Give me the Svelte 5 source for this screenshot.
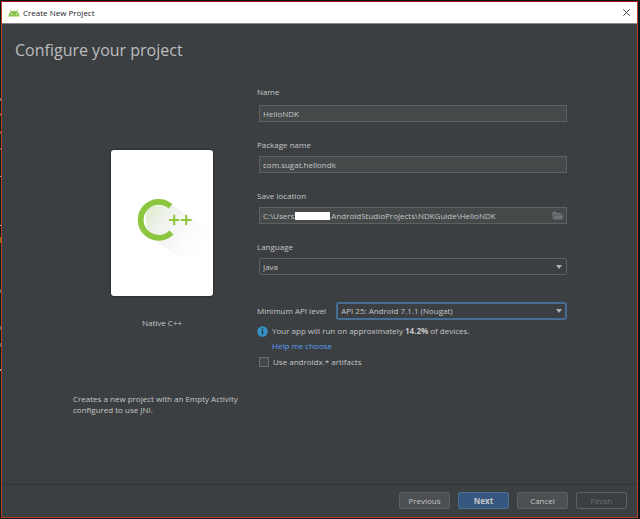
<script>
  let name = $state('HelloNDK');
  let packageName = $state('com.sugat.hellondk');
  let location = $state('C:\\Users\\\u2003\u2003\u2003\u2003.AndroidStudioProjects\\NDKGuide\\HelloNDK');
  let language = $state('Java');
  let api = $state('API 25: Android 7.1.1 (Nougat)');
  let androidx = $state(false);
</script>

<div class="desktop">
  <div class="window">
    <header class="titlebar">
      <svg class="android" width="12" height="8" viewBox="0 0 12 8" aria-hidden="true">
        <path d="M0.5 7.5C0.5 4.2 2.8 2 6 2s5.5 2.2 5.5 5.5z" fill="#8bc34a" />
        <path d="M2 .6 3.6 3M10 .6 8.4 3" stroke="#8bc34a" stroke-width=".9" />
        <circle cx="3.6" cy="5.2" r=".6" fill="#fff" />
        <circle cx="8.4" cy="5.2" r=".6" fill="#fff" />
      </svg>
      <span class="caption">Create New Project</span>
      <button class="close" aria-label="Close">
        <svg width="7" height="7" viewBox="0 0 7 7"><path d="M.3.3 6.7 6.7M6.7.3.3 6.7" stroke="#444" stroke-width="1" /></svg>
      </button>
    </header>

    <h1>Configure your project</h1>

    <main>
      <section class="template">
        <div class="card">
          <svg width="102" height="146" viewBox="0 0 102 146" role="img" aria-label="C++">
            <defs>
              <linearGradient id="shade" x1="30" y1="60" x2="82" y2="94" gradientUnits="userSpaceOnUse">
                <stop offset="0" stop-color="#dcedc8" />
                <stop offset=".4" stop-color="#f0f2ee" />
                <stop offset="1" stop-color="#fefefe" />
              </linearGradient>
            </defs>
            <path d="M34 57 60 54 96 79 90 104 66 106 36 85z" fill="url(#shade)" />
            <path d="M59.5 56.3A18 18 0 1 0 60.5 82.5" fill="none" stroke="#8cc63f" stroke-width="5.8" />
            <path d="M58 70H68.5M63.2 64.7V75.3M70 70H80.5M75.2 64.7V75.3" stroke="#8cc63f" stroke-width="2" />
          </svg>
        </div>
        <p class="kind">Native C++</p>
        <p class="about">Creates a new project with an Empty Activity configured to use JNI.</p>
      </section>

      <form onsubmit={(e) => e.preventDefault()}>
        <div class="field first">
          <label for="name">Name</label>
          <div class="holder"><input id="name" class="box" type="text" bind:value={name} /></div>
        </div>
        <div class="field">
          <label for="package">Package name</label>
          <div class="holder"><input id="package" class="box" type="text" bind:value={packageName} /></div>
        </div>
        <div class="field">
          <label for="location">Save location</label>
          <div class="holder">
            <input id="location" class="box" type="text" bind:value={location} />
            <span class="redacted"></span>
            <button type="button" class="browse" aria-label="Browse">
              <svg width="12" height="9" viewBox="0 0 12 9"><path d="M.5 8V.8H4l1 1.2h4.5v1.4H2.6z" fill="#6e7375" /><path d="M3 4.2h8.8L9.8 8.4H.8z" fill="#6e7375" /></svg>
            </button>
          </div>
        </div>
        <div class="field">
          <label for="language">Language</label>
          <div class="holder">
            <select id="language" class="box" bind:value={language}>
              <option>Java</option>
              <option>Kotlin</option>
            </select>
            <svg class="arrow" width="6" height="4" viewBox="0 0 6 4"><path d="M0 0h6L3 4z" fill="#afb1b3" /></svg>
          </div>
        </div>

        <div class="api">
          <label for="api">Minimum API level</label>
          <div class="holder">
            <select id="api" class="box focused" bind:value={api}>
              <option>API 25: Android 7.1.1 (Nougat)</option>
              <option>API 26: Android 8.0 (Oreo)</option>
            </select>
            <svg class="arrow" width="6" height="4" viewBox="0 0 6 4"><path d="M0 0h6L3 4z" fill="#afb1b3" /></svg>
          </div>
        </div>

        <p class="info">
          <svg width="11" height="11" viewBox="0 0 11 11" aria-hidden="true">
            <circle cx="5.5" cy="5.5" r="5.2" fill="#3592c4" />
            <path d="M5.5 2.2V3.6M5.5 4.6V8.6" stroke="#1e2c34" stroke-width="1.4" />
          </svg>
          <span>Your app will run on approximately <b>14.2%</b> of devices.</span>
        </p>
        <a class="help" href="#help">Help me choose</a>
        <label class="check"><input type="checkbox" bind:checked={androidx} />Use androidx.* artifacts</label>
      </form>
    </main>

    <footer>
      <button>Previous</button>
      <button class="primary">Next</button>
      <button>Cancel</button>
      <button disabled>Finish</button>
    </footer>
  </div>
</div>

<style>
  :global(body) { margin: 0; background: #07191e; }
  * { box-sizing: border-box; }
  .desktop {
    min-height: 100vh;
    display: flex;
    padding: 1px 2px 1px 1px;
    background:
      linear-gradient(#0000 98px, #777 98px 101px, #0000 101px 113px, #85553f 113px 116px, #0000 116px 131px, #85553f 131px 134px, #0000 134px 148px, #85553f 148px 150px, #0000 150px 176px, #aaa 176px 177px, #0000 177px 225px, #ccc 225px 226px, #0000 226px 237px, #8a7510 237px 243px, #0000 243px 289px, #567 289px 293px, #0000 293px 326px, #567 326px 330px, #0000 330px 343px, #567 343px 347px, #0000 347px 369px, #aaa 369px 371px, #0000 371px) 0 0 / 1px 100% no-repeat,
      #07191e;
    font: 8px/12px "Open Sans", "Noto Sans", sans-serif;
    color: #c4c6c8;
  }
  .window {
    flex: 1;
    display: flex;
    flex-direction: column;
    min-width: 0;
    border: 1px solid #b9431f;
    border-top-color: #a01010;
    background: #3c3f41;
  }
  .titlebar {
    display: flex;
    align-items: center;
    height: 22px;
    padding: 0 7px 0 6px;
    background: #fff;
    border-bottom: 1px solid #888;
    color: #222;
  }
  .caption { flex: 1; margin-left: 3px; }
  button, input, select { font: inherit; color: inherit; }
  .close { display: flex; padding: 0; border: 0; background: none; }
  h1 { margin: 14px 13px 0; font-size: 16px; line-height: 24px; font-weight: 400; color: #bbbdbf; }
  p { margin: 0; }
  main { flex: 1; display: flex; padding: 24px 70px 0 71px; }
  .template { width: 184px; flex: none; display: flex; flex-direction: column; padding-top: 64px; }
  .card {
    width: 102px;
    height: 146px;
    margin-left: 38px;
    background: #fff;
    border-radius: 3px;
    box-shadow: 0 0 2px #111;
    overflow: hidden;
  }
  .card svg { display: block; }
  .kind { width: 102px; margin: 21px 0 0 38px; text-align: center; }
  .about { width: 176px; margin-top: 64px; line-height: 11px; }
  form { flex: 1; min-width: 0; display: flex; flex-direction: column; }
  .field { display: flex; flex-direction: column; gap: 5px; margin-bottom: 17px; }
  .first { gap: 7px; }
  .field > .holder { margin-left: 2px; }
  .holder { position: relative; display: flex; flex: 1; }
  .box {
    width: 100%;
    min-width: 0;
    height: 17px;
    padding: 0 3px;
    border: 1px solid #5e6162;
    background: #45494a;
    outline: none;
    appearance: none;
  }
  select.box { background: #3c3f41; border-radius: 2px; }
  .box.focused { height: 18px; border: 2px solid #466d94; border-radius: 3px; }
  .arrow { position: absolute; right: 5px; top: 7px; pointer-events: none; }
  .browse { position: absolute; right: 3px; top: 4px; display: flex; padding: 0; border: 0; background: none; }
  .redacted { position: absolute; left: 36px; top: 5px; width: 35px; height: 8px; background: #fff; }
  .api { display: flex; align-items: center; gap: 10px; margin-top: 10px; }
  .info { display: flex; align-items: center; gap: 4px; margin-top: 5px; }
  .help { align-self: flex-start; margin: 3px 0 0 15px; color: #589df6; text-decoration: none; }
  .check { display: flex; align-items: center; gap: 4px; margin: 4px 0 0 2px; }
  .check input { appearance: none; width: 10px; height: 10px; margin: 0; border: 1px solid #6b6e70; background: #43494a; }
  footer {
    display: flex;
    justify-content: flex-end;
    gap: 8px;
    padding: 7px 10px 8px;
    border-top: 1px solid #323536;
  }
  footer button {
    width: 51px;
    height: 17px;
    padding: 0;
    border: 1px solid #5e6060;
    border-radius: 2px;
    background: #4c5052;
  }
  footer .primary { background: #365880; border-color: #4c708c; font-weight: 700; }
  footer button:disabled { background: none; color: #6d6f70; }
</style>
